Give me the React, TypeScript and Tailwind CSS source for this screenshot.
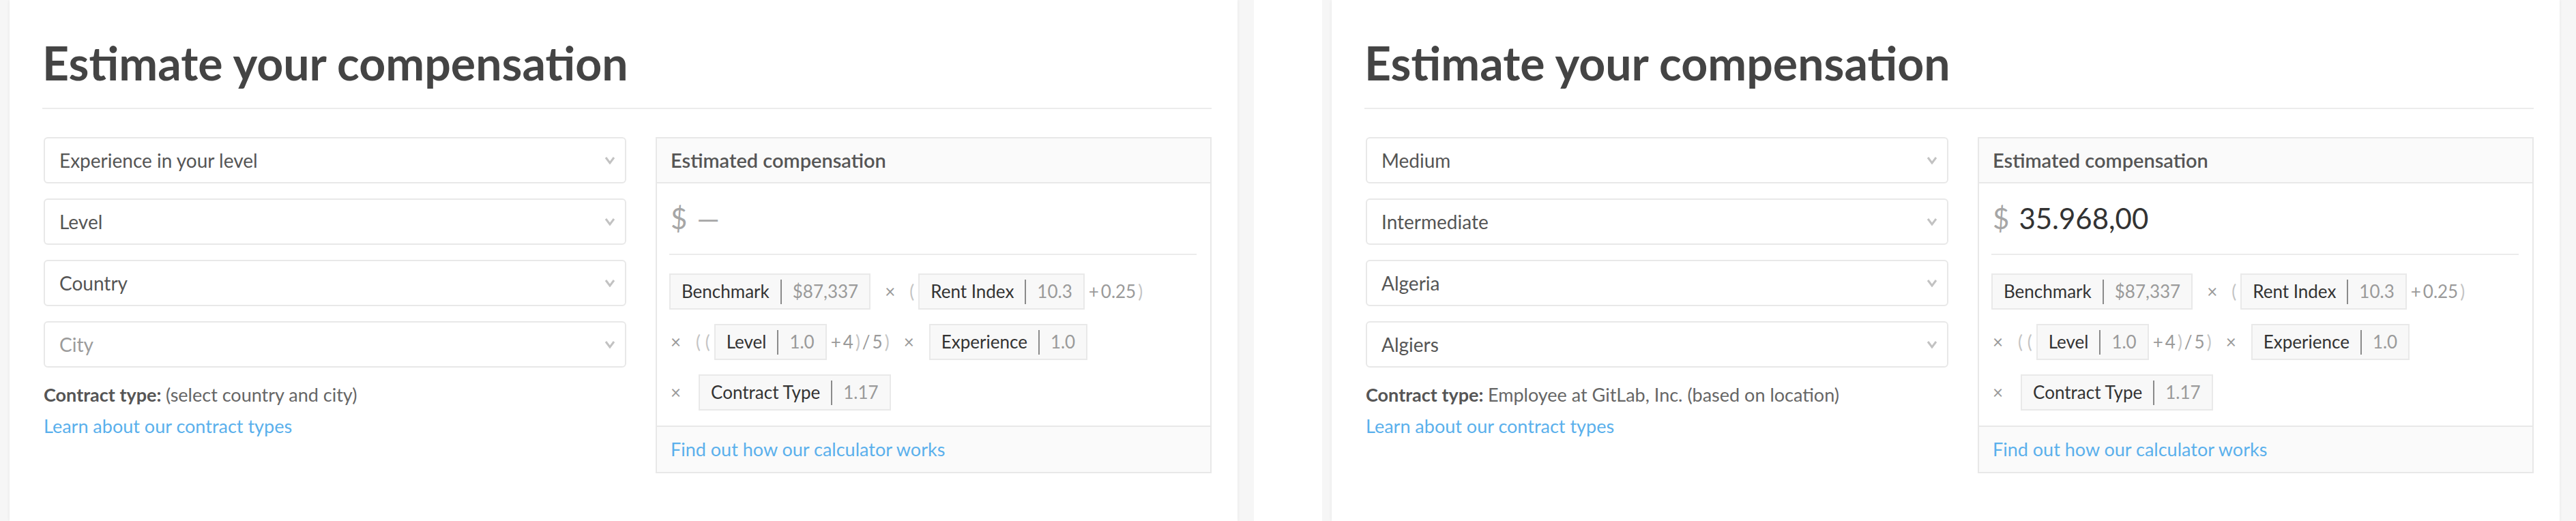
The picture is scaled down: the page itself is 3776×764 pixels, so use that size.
import React from "react";

type PanelData = {
  experience: string;
  level: string;
  country: string;
  city: string;
  cityPlaceholder: boolean;
  contract: string;
  amount: string | null;
};

const panels: PanelData[] = [
  {
    experience: "Experience in your level",
    level: "Level",
    country: "Country",
    city: "City",
    cityPlaceholder: true,
    contract: "(select country and city)",
    amount: null,
  },
  {
    experience: "Medium",
    level: "Intermediate",
    country: "Algeria",
    city: "Algiers",
    cityPlaceholder: false,
    contract: "Employee at GitLab, Inc. (based on location)",
    amount: "35.968,00",
  },
];

const Chevron = () => (
  <svg width="16" height="12" viewBox="0 0 16 12" className="shrink-0">
    <polyline points="2,2 8,10 14,2" fill="none" stroke="#c2c2c2" strokeWidth="3" />
  </svg>
);

const Select = ({ value, muted }: { value: string; muted?: boolean }) => (
  <div className="flex h-[68px] items-center justify-between rounded-[6px] border-2 border-[#e8e8e8] bg-white pl-[21px] pr-[14px] text-[28px]">
    <span className={muted ? "text-[#9b9b9b]" : "text-[#555555]"}>{value}</span>
    <Chevron />
  </div>
);

const Pill = ({ label, value }: { label: string; value: string }) => (
  <div className="flex h-[53px] shrink-0 items-center border-2 border-[#e9e9e9] bg-[#f8f8f8] px-[16px] text-[26px]">
    <span className="text-[#333333]">{label}</span>
    <span className="mx-[16px] h-[36px] w-[2px] bg-[#8a8a8a]" />
    <span className="text-[#9a9a9a]">{value}</span>
  </div>
);

const Times = () => <span className="text-[#9a9a9a]">×</span>;

const Paren = ({ children }: { children: React.ReactNode }) => (
  <span className="text-[#c4c4c4]">{children}</span>
);

const Panel = ({ data }: { data: PanelData }) => (
  <div className="flex w-[1838px] shrink-0">
    <div className="w-[14px] bg-[#f6f6f6]" />
    <div className="relative h-[764px] w-[1800px] bg-white pl-[48px] pr-[38px] pt-[52px] shadow-[0_0_5px_rgba(0,0,0,0.07)]">
      <h1 className="text-[68px] leading-[80px] font-bold text-[#444444]">
        Estimate your compensation
      </h1>
      <div className="mt-[26px] h-[2px] bg-[#ececec]" />

      <div className="mt-[41px] flex text-[27px]">
        {/* selects */}
        <div className="ml-[2px] flex w-[854px] flex-col">
          <div className="flex flex-col gap-[22px]">
            <Select value={data.experience} />
            <Select value={data.level} />
            <Select value={data.country} />
            <Select value={data.city} muted={data.cityPlaceholder} />
          </div>
          <div className="mt-[17px] text-[27px] leading-[46px]">
            <span className="font-bold text-[#555555]">Contract type: </span>
            <span className="text-[#666666]">{data.contract}</span>
          </div>
          <div className="leading-[46px] text-[#5ab0ec]">Learn about our contract types</div>
        </div>

        {/* estimate card */}
        <div className="ml-[43px] flex-1 border-2 border-[#e8e8e8]">
          <div className="flex h-[66px] items-center border-b-2 border-[#e8e8e8] bg-[#fafafa] px-[20px] text-[29px] font-semibold text-[#555555]">
            Estimated compensation
          </div>
          <div className="pl-[18px] pr-[20px] pt-[23px] pb-[22px]">
            <div className="flex h-[56px] items-center pl-[2px] text-[42px] leading-[56px]">
              <span className="text-[#a6a6a6]">$</span>
              {data.amount ? (
                <span className="ml-[14px] text-[#333333]">{data.amount}</span>
              ) : (
                <span className="ml-[14px] text-[#a6a6a6]">—</span>
              )}
            </div>
            <div className="mt-[24px] h-[2px] bg-[#ececec]" />

            <div className="mt-[27px] flex flex-col gap-[21px] text-[26px]">
              <div className="flex items-center">
                <Pill label="Benchmark" value="$87,337" />
                <span className="ml-[21px] mr-[21px]">
                  <Times />
                </span>
                <Paren>(</Paren>
                <span className="ml-[6px]">
                  <Pill label="Rent Index" value="10.3" />
                </span>
                <span className="ml-[6px] flex gap-[3px] text-[#9a9a9a]">
                  <span>+</span>
                  <span>0.25</span>
                  <Paren>)</Paren>
                </span>
              </div>

              <div className="flex items-center">
                <span className="ml-[2px] mr-[22px]">
                  <Times />
                </span>
                <Paren>( (</Paren>
                <span className="ml-[6px]">
                  <Pill label="Level" value="1.0" />
                </span>
                <span className="ml-[6px] flex gap-[3px] text-[#9a9a9a]">
                  <span>+</span>
                  <span>4</span>
                  <Paren>)</Paren>
                  <span>/</span>
                  <span>5</span>
                  <Paren>)</Paren>
                </span>
                <span className="ml-[21px] mr-[22px]">
                  <Times />
                </span>
                <Pill label="Experience" value="1.0" />
              </div>

              <div className="flex items-center">
                <span className="ml-[2px] mr-[26px]">
                  <Times />
                </span>
                <Pill label="Contract Type" value="1.17" />
              </div>
            </div>
          </div>
          <div className="flex h-[68px] items-center border-t-2 border-[#e8e8e8] bg-[#fafafa] px-[20px] text-[#5ab0ec]">
            Find out how our calculator works
          </div>
        </div>
      </div>
    </div>
    <div className="w-[24px] bg-[#f6f6f6]" />
  </div>
);

export default function App() {
  return (
    <div
      className="flex h-[764px] w-[3776px] gap-[100px] overflow-hidden bg-white"
      style={{ fontFamily: "Lato, 'Liberation Sans', sans-serif" }}
    >
      {panels.map((p, i) => (
        <Panel key={i} data={p} />
      ))}
    </div>
  );
}
